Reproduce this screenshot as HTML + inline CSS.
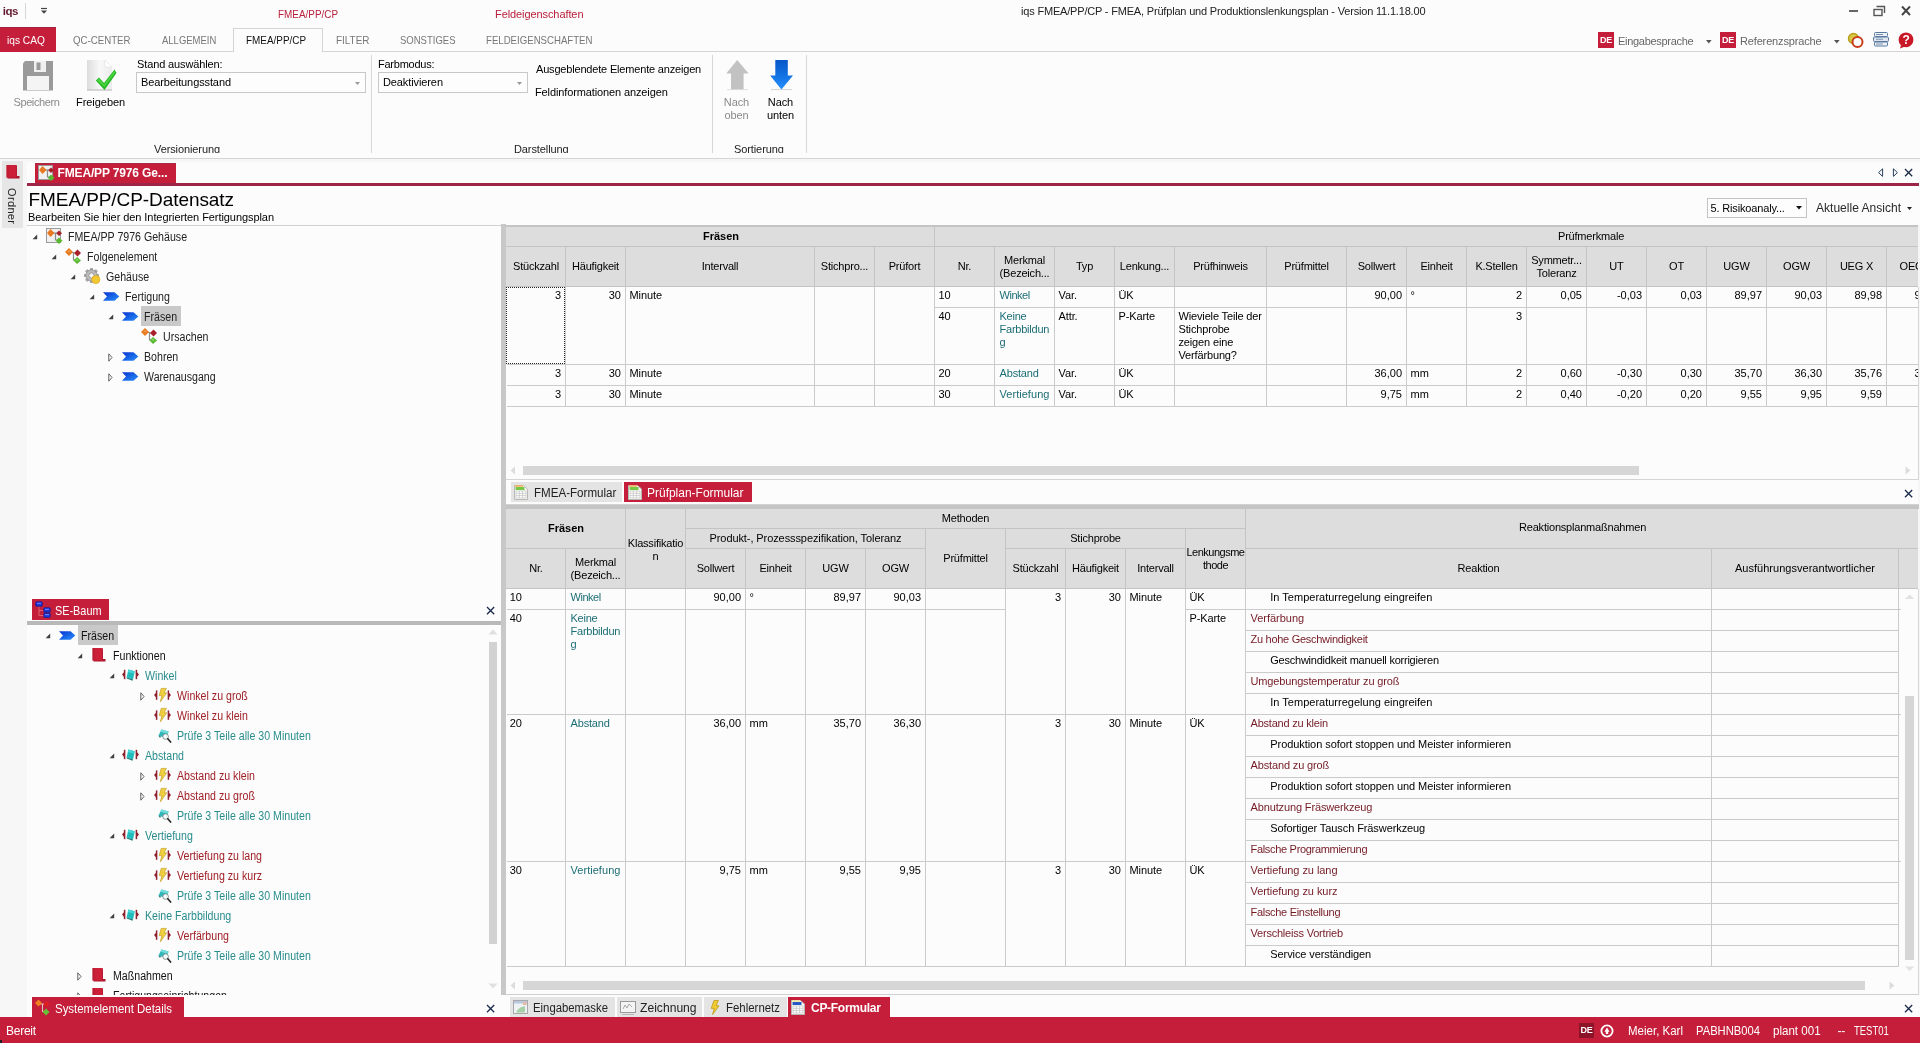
<!DOCTYPE html>
<html lang="de"><head><meta charset="utf-8"><title>iqs FMEA/PP/CP</title>
<style>
html,body{margin:0;padding:0;}
body{width:1920px;height:1043px;overflow:hidden;background:#fcfcfc;position:relative;font-family:"Liberation Sans",sans-serif;font-size:11px;color:#000;letter-spacing:-0.1px;}
body div{position:absolute;box-sizing:border-box;}
.t{position:absolute;white-space:nowrap;}
svg{position:absolute;overflow:visible;}
.hd{background:#dddddd;border-right:1px solid #c4c4c4;border-bottom:1px solid #c4c4c4;}
.c{border-right:1px solid #cbcbcb;border-bottom:1px solid #cbcbcb;background:#fcfcfc;}
</style></head><body><div id="app" style="left:0;top:0;width:1920px;height:1043px;will-change:transform;">
<span class="t" style="left:2.8px;top:3.8000000000000007px;line-height:14px;font-weight:bold;font-size:11.5px;color:#641a30;letter-spacing:-0.507px;">iqs</span>
<div style="left:25px;top:3px;width:1px;height:16px;background:#d8d8d8;"></div>
<svg style="left:40px;top:6.5px" width="8" height="8" viewBox="0 0 8 8"><path d="M1 1.5 H7" stroke="#444" stroke-width="1.2"/><path d="M1 3.5 H7 L4 6.8 Z" fill="#444"/></svg>
<span class="t" style="left:278px;top:6.5px;line-height:14px;color:#b8203c;letter-spacing:0;transform-origin:0 50%;transform:scaleX(0.9006);">FMEA/PP/CP</span>
<span class="t" style="left:495px;top:6.5px;line-height:14px;color:#b8203c;letter-spacing:-0.087px;">Feldeigenschaften</span>
<span class="t" style="left:1021px;top:3.8000000000000007px;line-height:14px;color:#222;letter-spacing:-0.184px;">iqs FMEA/PP/CP - FMEA, Prüfplan und Produktionslenkungsplan - Version 11.1.18.00</span>
<svg style="left:1848px;top:5px" width="64" height="12" viewBox="0 0 64 12"><path d="M1 6 H10" stroke="#555" stroke-width="1.8"/><path d="M28.5 1.5 H36.5 V8" fill="none" stroke="#555" stroke-width="1.4"/><rect x="26" y="4.5" width="8" height="6" fill="none" stroke="#555" stroke-width="1.4"/><path d="M54 1.5 L62 10 M62 1.5 L54 10" stroke="#444" stroke-width="1.9"/></svg>
<div style="left:0px;top:51px;width:1920px;height:1px;background:#d4d4d4;"></div>
<div style="left:0px;top:27px;width:56px;height:25px;background:#c41e3a;border-top:1px solid #a0223e;"></div>
<span class="t" style="left:7.2px;top:33.0px;line-height:14px;color:#fff;font-size:11px;letter-spacing:0;transform-origin:0 50%;transform:scaleX(0.9230);">iqs CAQ</span>
<span class="t" style="left:73px;top:32.5px;line-height:14px;color:#777;letter-spacing:0;transform-origin:0 50%;transform:scaleX(0.8794);">QC-CENTER</span>
<span class="t" style="left:161.5px;top:32.5px;line-height:14px;color:#777;letter-spacing:0;transform-origin:0 50%;transform:scaleX(0.8624);">ALLGEMEIN</span>
<div style="left:233px;top:28px;width:90px;height:24px;background:#fcfcfc;border:1px solid #d4d4d4;border-bottom:none;"></div>
<span class="t" style="left:246px;top:32.5px;line-height:14px;color:#111;letter-spacing:0;transform-origin:0 50%;transform:scaleX(0.9006);">FMEA/PP/CP</span>
<span class="t" style="left:336px;top:32.5px;line-height:14px;color:#777;letter-spacing:0;transform-origin:0 50%;transform:scaleX(0.9036);">FILTER</span>
<span class="t" style="left:400px;top:32.5px;line-height:14px;color:#777;letter-spacing:0;transform-origin:0 50%;transform:scaleX(0.8648);">SONSTIGES</span>
<span class="t" style="left:486px;top:32.5px;line-height:14px;color:#777;letter-spacing:0;transform-origin:0 50%;transform:scaleX(0.8756);">FELDEIGENSCHAFTEN</span>
<div style="left:1598px;top:32px;width:16px;height:16px;background:#c41e3a;color:#fff;font-weight:bold;font-size:9px;line-height:16px;text-align:center;letter-spacing:-0.3px;">DE</div>
<span class="t" style="left:1618px;top:33.5px;line-height:14px;color:#666;letter-spacing:-0.300px;">Eingabesprache</span>
<svg style="left:1706px;top:39.5px" width="6" height="4" viewBox="0 0 6 4"><path d="M0 0 H5.6 L2.8 3.4 Z" fill="#555"/></svg>
<div style="left:1720px;top:32px;width:16px;height:16px;background:#c41e3a;color:#fff;font-weight:bold;font-size:9px;line-height:16px;text-align:center;letter-spacing:-0.3px;">DE</div>
<span class="t" style="left:1740px;top:33.5px;line-height:14px;color:#666;letter-spacing:-0.154px;">Referenzsprache</span>
<svg style="left:1833.5px;top:39.5px" width="6" height="4" viewBox="0 0 6 4"><path d="M0 0 H5.6 L2.8 3.4 Z" fill="#555"/></svg>
<svg style="left:1847px;top:32px" width="18" height="17" viewBox="0 0 18 17"><circle cx="6.5" cy="6.5" r="5" fill="#d8c848" stroke="#b8a020" stroke-width="1.5"/><circle cx="10.5" cy="10" r="5" fill="#fff" stroke="#c83c1c" stroke-width="2"/></svg>
<svg style="left:1873px;top:32px" width="16" height="15" viewBox="0 0 16 15"><rect x="1.5" y="0.5" width="13" height="4" rx="1" fill="#eef2f6" stroke="#5878a0"/><rect x="0.5" y="5" width="15" height="4.5" rx="1" fill="#dfe6ee" stroke="#5878a0"/><rect x="1.5" y="10" width="13" height="4" rx="1" fill="#eef2f6" stroke="#5878a0"/><path d="M3 2.5 H10 M3 7.2 H10 M3 12 H10" stroke="#7890b0" stroke-width="1"/></svg>
<svg style="left:1898px;top:32px" width="17" height="17" viewBox="0 0 17 17"><circle cx="8" cy="7.8" r="7.4" fill="#c81828"/><path d="M3 13 L2 16.5 L7 14.5 Z" fill="#c81828"/><text x="8" y="12" text-anchor="middle" font-family="Liberation Sans, sans-serif" font-weight="bold" font-size="12" fill="#fff">?</text></svg>
<div style="left:0px;top:158px;width:1920px;height:1px;background:#d4d4d4;"></div>
<div style="left:0px;top:159px;width:1920px;height:3px;background:#f6f6f6;"></div>
<div style="left:371px;top:55px;width:1px;height:99px;background:#d8d8d8;"></div>
<div style="left:712px;top:55px;width:1px;height:99px;background:#d8d8d8;"></div>
<div style="left:806px;top:55px;width:1px;height:99px;background:#d8d8d8;"></div>
<svg style="left:22px;top:60px" width="32" height="31" viewBox="0 0 32 31"><path d="M3 1 H31 V30.5 H1 V3.5 Z" fill="#9a9a9a"/><rect x="12" y="1" width="12" height="11" fill="#f0f0f0"/><rect x="14.5" y="2.5" width="4" height="7.5" fill="#9a9a9a"/><rect x="5" y="16" width="22" height="14" fill="#f4f4f4"/></svg>
<span class="t" style="left:13.5px;top:95.0px;line-height:14px;color:#8a8a8a;letter-spacing:-0.404px;">Speichern</span>
<svg style="left:86px;top:59px" width="32" height="33" viewBox="0 0 32 33"><defs><linearGradient id="g1" x1="0" y1="0" x2="1" y2="0"><stop offset="0" stop-color="#dcdcdc"/><stop offset="0.5" stop-color="#f8f8f8"/><stop offset="1" stop-color="#ececec"/></linearGradient></defs><path d="M1 1 H19 L26 8 V31 H1 Z" fill="url(#g1)"/><path d="M19 1 V8 H26 Z" fill="#fff" stroke="#e0e0e0" stroke-width="0.6"/><path d="M1 31 H26" stroke="#c8c8c8" stroke-width="1.4"/><path d="M9.8 21.5 L13 18.5 L18 24 L28.5 10.5 L30.5 14 L18.5 31 Z" fill="#28b828"/><path d="M11 21.3 L13 19.6 L18 25.4 L28.3 12 L29.2 13.6 L18.3 28 Z" fill="#58e048" opacity="0.7"/></svg>
<span class="t" style="left:76px;top:95.0px;line-height:14px;letter-spacing:-0.05px;">Freigeben</span>
<span class="t" style="left:137px;top:57.0px;line-height:14px;letter-spacing:-0.12px;">Stand auswählen:</span>
<div style="left:136px;top:72px;width:230px;height:21px;background:#fdfdfd;border:1px solid #c8c8c8;"></div>
<span class="t" style="left:141px;top:74.5px;line-height:14px;letter-spacing:-0.108px;">Bearbeitungsstand</span>
<svg style="left:355px;top:82px" width="5" height="3" viewBox="0 0 5 3"><path d="M0 0 H5 L2.5 3 Z" fill="#9a9a9a"/></svg>
<span class="t" style="left:154px;top:142.0px;line-height:14px;color:#222;letter-spacing:-0.1px;">Versionierung</span>
<span class="t" style="left:378px;top:57.0px;line-height:14px;letter-spacing:-0.243px;">Farbmodus:</span>
<div style="left:378px;top:72px;width:150px;height:21px;background:#fdfdfd;border:1px solid #c8c8c8;"></div>
<span class="t" style="left:383px;top:74.5px;line-height:14px;letter-spacing:-0.103px;">Deaktivieren</span>
<svg style="left:517px;top:82px" width="5" height="3" viewBox="0 0 5 3"><path d="M0 0 H5 L2.5 3 Z" fill="#9a9a9a"/></svg>
<span class="t" style="left:536px;top:61.5px;line-height:14px;letter-spacing:-0.18px;">Ausgeblendete Elemente anzeigen</span>
<span class="t" style="left:535px;top:84.5px;line-height:14px;letter-spacing:-0.12px;">Feldinformationen anzeigen</span>
<span class="t" style="left:514px;top:142.0px;line-height:14px;color:#222;">Darstellung</span>
<svg style="left:725px;top:59px" width="25" height="31" viewBox="0 0 25 31"><path d="M12.2 1 L23.6 14.5 H18.6 V30.4 H6 V14.5 H1.2 Z" fill="#c2c2c2"/><path d="M2 30.6 H23" stroke="#d8d8d8" stroke-width="0.8"/></svg>
<svg style="left:769px;top:59px" width="25" height="31" viewBox="0 0 25 31"><defs><linearGradient id="g2" x1="0" y1="0" x2="0" y2="1"><stop offset="0" stop-color="#0858c8"/><stop offset="0.5" stop-color="#1070e0"/><stop offset="1" stop-color="#2890ff"/></linearGradient></defs><path d="M6.3 1 H18.8 V16.4 H24 L12.4 30.4 L1.2 16.4 H6.3 Z" fill="url(#g2)"/><path d="M2 30.6 H23" stroke="#c8c8c8" stroke-width="0.8"/></svg>
<span class="t" style="left:712px;width:49px;text-align:center;top:95.0px;line-height:14px;color:#8a8a8a;">Nach</span>
<span class="t" style="left:712px;width:49px;text-align:center;top:108.0px;line-height:14px;color:#8a8a8a;">oben</span>
<span class="t" style="left:756px;width:49px;text-align:center;top:95.0px;line-height:14px;">Nach</span>
<span class="t" style="left:756px;width:49px;text-align:center;top:108.0px;line-height:14px;">unten</span>
<span class="t" style="left:734px;top:142.0px;line-height:14px;color:#222;">Sortierung</span>
<div style="left:0px;top:153px;width:1920px;height:5px;background:#fcfcfc;"></div>
<div style="left:0px;top:159px;width:27px;height:858px;background:#f7f7f7;"></div>
<div style="left:2px;top:161px;width:21px;height:67px;background:#e6e6e6;"></div>
<svg style="left:6px;top:165px" width="14.0" height="14.0" viewBox="0 0 14 14"><path d="M1.5 0.5 H11 V11 H13.5 V13.5 H1.5 Z" fill="#a8162c"/><path d="M0.5 0 H10.5 V12.5 H0.5 Z" fill="#cc2038"/><path d="M0.5 0 H3 V12.5 H0.5 Z" fill="#b81a30" opacity="0.6"/></svg>
<span class="t" style="left:5px;top:187.5px;width:14px;height:40px;writing-mode:vertical-rl;font-size:11px;line-height:14px;color:#222;letter-spacing:0.354px;">Ordner</span>
<div style="left:35px;top:163px;width:141px;height:20px;background:#c41e3a;border-top:1px solid #a62a44;"></div>
<svg style="left:38px;top:165px" width="17" height="16" viewBox="0 0 17 16"><rect x="0.5" y="0.5" width="14" height="14" fill="#f0f0f0" stroke="#9a9a9a"/><path d="M5 5 H11 M9.5 5 V12 H11" fill="none" stroke="#8a8a8a" stroke-width="1.2"/><path d="M4.5 1 L8.5 5 L4.5 9 L1 5 Z" fill="#e87a22"/><path d="M13 2.5 L16 5.2 L13 8 L10.2 5.2 Z" fill="#a82028"/><path d="M13 9.5 L16.5 12.8 L13 16 L9.8 12.8 Z" fill="#58b830"/></svg>
<span class="t" style="left:57.5px;top:166.0px;line-height:14px;color:#fff;font-weight:bold;font-size:12px;letter-spacing:-0.146px;">FMEA/PP 7976 Ge...</span>
<div style="left:27px;top:183px;width:1892px;height:3px;background:#9e2448;"></div>
<svg style="left:1877px;top:168px" width="24" height="10" viewBox="0 0 24 10"><path d="M5.6 0.8 L1.6 4.6 L5.6 8.4 Z" fill="none" stroke="#2a3f5f" stroke-width="1"/><path d="M16.4 0.8 L20.4 4.6 L16.4 8.4 Z" fill="none" stroke="#2a3f5f" stroke-width="1"/></svg>
<svg style="left:1904.4px;top:167.70000000000002px" width="9.2" height="9.2" viewBox="0 0 9.2 9.2"><path d="M1 1 L8.2 8.2 M8.2 1 L1 8.2" stroke="#1a2a4a" stroke-width="1.3" fill="none"/></svg>
<span class="t" style="left:28.5px;top:187.5px;line-height:24px;font-size:19px;color:#000;letter-spacing:-0.076px;">FMEA/PP/CP-Datensatz</span>
<span class="t" style="left:28px;top:210.0px;line-height:14px;letter-spacing:-0.07px;">Bearbeiten Sie hier den Integrierten Fertigungsplan</span>
<div style="left:27px;top:225px;width:1891px;height:1px;background:#d0d0d0;"></div>
<div style="left:1707px;top:198px;width:100px;height:20px;background:#fdfdfd;border:1px solid #c4c4c4;"></div>
<span class="t" style="left:1710.5px;top:201.0px;line-height:14px;letter-spacing:-0.152px;">5. Risikoanaly...</span>
<svg style="left:1795.5px;top:206.2px" width="6" height="4" viewBox="0 0 6 4"><path d="M0 0 H6 L3 3.6 Z" fill="#111"/></svg>
<span class="t" style="left:1815.5px;top:201.0px;line-height:14px;font-size:12px;color:#2a2a2a;letter-spacing:0;transform-origin:0 50%;transform:scaleX(1.0034);">Aktuelle Ansicht</span>
<svg style="left:1907px;top:207.2px" width="5" height="3" viewBox="0 0 5 3"><path d="M0 0 H5 L2.5 3 Z" fill="#222"/></svg>
<svg style="left:31.5px;top:234px" width="6" height="6" viewBox="0 0 6 6"><path d="M5.2 0.6 L5.2 5.2 L0.6 5.2 Z" fill="#404040"/></svg>
<svg style="left:46px;top:228px" width="17" height="16" viewBox="0 0 17 16"><rect x="0.5" y="0.5" width="14" height="14" fill="#f0f0f0" stroke="#9a9a9a"/><path d="M5 5 H11 M9.5 5 V12 H11" fill="none" stroke="#8a8a8a" stroke-width="1.2"/><path d="M4.5 1 L8.5 5 L4.5 9 L1 5 Z" fill="#e87a22"/><path d="M13 2.5 L16 5.2 L13 8 L10.2 5.2 Z" fill="#a82028"/><path d="M13 9.5 L16.5 12.8 L13 16 L9.8 12.8 Z" fill="#58b830"/></svg>
<span class="t" style="left:68px;top:229.5px;line-height:14px;color:#222;font-size:12px;letter-spacing:0;transform-origin:0 50%;transform:scaleX(0.885);">FMEA/PP 7976 Gehäuse</span>
<svg style="left:50.5px;top:254px" width="6" height="6" viewBox="0 0 6 6"><path d="M5.2 0.6 L5.2 5.2 L0.6 5.2 Z" fill="#404040"/></svg>
<svg style="left:65px;top:248px" width="16" height="16" viewBox="0 0 16 16"><path d="M4 4.5 H9.5 M8.5 4.5 V12 H10" fill="none" stroke="#8a8a8a" stroke-width="1.2"/><path d="M4 0 L8 4 L4 8 L0 4 Z" fill="#e87a22"/><path d="M2.2 4 L4 2.2 L5.8 4 Z" fill="#f4a35c"/><path d="M12.5 1.5 L16 5 L12.5 8.5 L9 5 Z" fill="#a82028"/><path d="M12 9 L16 12.5 L12 16 L8.6 12.5 Z" fill="#58b830"/><path d="M10 12.5 L12 10.6 L14 12.5 Z" fill="#8cd868"/></svg>
<span class="t" style="left:87px;top:249.5px;line-height:14px;color:#222;font-size:12px;letter-spacing:0;transform-origin:0 50%;transform:scaleX(0.885);">Folgenelement</span>
<svg style="left:69.5px;top:274px" width="6" height="6" viewBox="0 0 6 6"><path d="M5.2 0.6 L5.2 5.2 L0.6 5.2 Z" fill="#404040"/></svg>
<svg style="left:84px;top:268px" width="17" height="17" viewBox="0 0 17 17"><rect x="6" y="0" width="3" height="15" rx="0.8" fill="#a8a8a8" transform="rotate(0 7.5 7.5)"/><rect x="6" y="0" width="3" height="15" rx="0.8" fill="#a8a8a8" transform="rotate(45 7.5 7.5)"/><rect x="6" y="0" width="3" height="15" rx="0.8" fill="#a8a8a8" transform="rotate(90 7.5 7.5)"/><rect x="6" y="0" width="3" height="15" rx="0.8" fill="#a8a8a8" transform="rotate(135 7.5 7.5)"/><rect x="6" y="0" width="3" height="15" rx="0.8" fill="#a8a8a8" transform="rotate(180 7.5 7.5)"/><rect x="6" y="0" width="3" height="15" rx="0.8" fill="#a8a8a8" transform="rotate(225 7.5 7.5)"/><rect x="6" y="0" width="3" height="15" rx="0.8" fill="#a8a8a8" transform="rotate(270 7.5 7.5)"/><rect x="6" y="0" width="3" height="15" rx="0.8" fill="#a8a8a8" transform="rotate(315 7.5 7.5)"/><circle cx="7.5" cy="7.5" r="5.6" fill="#bcbcbc" stroke="#8c8c8c" stroke-width="0.8"/><circle cx="7.5" cy="7.5" r="2.6" fill="#f4f4f4" stroke="#8c8c8c" stroke-width="0.8"/><circle cx="11.8" cy="11.6" r="4" fill="#f2c832" stroke="#d8a818" stroke-width="0.8"/></svg>
<span class="t" style="left:106px;top:269.5px;line-height:14px;color:#222;font-size:12px;letter-spacing:0;transform-origin:0 50%;transform:scaleX(0.885);">Gehäuse</span>
<svg style="left:88.5px;top:294px" width="6" height="6" viewBox="0 0 6 6"><path d="M5.2 0.6 L5.2 5.2 L0.6 5.2 Z" fill="#404040"/></svg>
<svg style="left:103px;top:291.8px" width="17" height="9" viewBox="0 0 17 9"><defs><linearGradient id="g4" x1="0" y1="0" x2="1" y2="1"><stop offset="0" stop-color="#0a2fd0"/><stop offset="0.55" stop-color="#1868e8"/><stop offset="1" stop-color="#2c8cf8"/></linearGradient></defs><path d="M0 0.3 H11.5 L16.3 4.5 L11.5 8.7 H0 L4 4.5 Z" fill="url(#g4)"/></svg>
<span class="t" style="left:125px;top:289.5px;line-height:14px;color:#222;font-size:12px;letter-spacing:0;transform-origin:0 50%;transform:scaleX(0.885);">Fertigung</span>
<div style="left:141px;top:306px;width:40px;height:20px;background:#c9c9c9;"></div>
<svg style="left:107.5px;top:314px" width="6" height="6" viewBox="0 0 6 6"><path d="M5.2 0.6 L5.2 5.2 L0.6 5.2 Z" fill="#404040"/></svg>
<svg style="left:122px;top:311.8px" width="17" height="9" viewBox="0 0 17 9"><defs><linearGradient id="g5" x1="0" y1="0" x2="1" y2="1"><stop offset="0" stop-color="#0a2fd0"/><stop offset="0.55" stop-color="#1868e8"/><stop offset="1" stop-color="#2c8cf8"/></linearGradient></defs><path d="M0 0.3 H11.5 L16.3 4.5 L11.5 8.7 H0 L4 4.5 Z" fill="url(#g5)"/></svg>
<span class="t" style="left:144px;top:309.5px;line-height:14px;color:#222;font-size:12px;letter-spacing:0;transform-origin:0 50%;transform:scaleX(0.885);">Fräsen</span>
<svg style="left:141px;top:328px" width="16" height="16" viewBox="0 0 16 16"><path d="M4 4.5 H9.5 M8.5 4.5 V12 H10" fill="none" stroke="#8a8a8a" stroke-width="1.2"/><path d="M4 0 L8 4 L4 8 L0 4 Z" fill="#e87a22"/><path d="M2.2 4 L4 2.2 L5.8 4 Z" fill="#f4a35c"/><path d="M12.5 1.5 L16 5 L12.5 8.5 L9 5 Z" fill="#a82028"/><path d="M12 9 L16 12.5 L12 16 L8.6 12.5 Z" fill="#58b830"/><path d="M10 12.5 L12 10.6 L14 12.5 Z" fill="#8cd868"/></svg>
<span class="t" style="left:163px;top:329.5px;line-height:14px;color:#222;font-size:12px;letter-spacing:0;transform-origin:0 50%;transform:scaleX(0.885);">Ursachen</span>
<svg style="left:108.3px;top:352.5px" width="6" height="9" viewBox="0 0 6 9"><path d="M0.8 0.8 L4 4.5 L0.8 8.2 Z" fill="#fcfcfc" stroke="#606060" stroke-width="1"/></svg>
<svg style="left:122px;top:351.8px" width="17" height="9" viewBox="0 0 17 9"><defs><linearGradient id="g6" x1="0" y1="0" x2="1" y2="1"><stop offset="0" stop-color="#0a2fd0"/><stop offset="0.55" stop-color="#1868e8"/><stop offset="1" stop-color="#2c8cf8"/></linearGradient></defs><path d="M0 0.3 H11.5 L16.3 4.5 L11.5 8.7 H0 L4 4.5 Z" fill="url(#g6)"/></svg>
<span class="t" style="left:144px;top:349.5px;line-height:14px;color:#222;font-size:12px;letter-spacing:0;transform-origin:0 50%;transform:scaleX(0.885);">Bohren</span>
<svg style="left:108.3px;top:372.5px" width="6" height="9" viewBox="0 0 6 9"><path d="M0.8 0.8 L4 4.5 L0.8 8.2 Z" fill="#fcfcfc" stroke="#606060" stroke-width="1"/></svg>
<svg style="left:122px;top:371.8px" width="17" height="9" viewBox="0 0 17 9"><defs><linearGradient id="g7" x1="0" y1="0" x2="1" y2="1"><stop offset="0" stop-color="#0a2fd0"/><stop offset="0.55" stop-color="#1868e8"/><stop offset="1" stop-color="#2c8cf8"/></linearGradient></defs><path d="M0 0.3 H11.5 L16.3 4.5 L11.5 8.7 H0 L4 4.5 Z" fill="url(#g7)"/></svg>
<span class="t" style="left:144px;top:369.5px;line-height:14px;color:#222;font-size:12px;letter-spacing:0;transform-origin:0 50%;transform:scaleX(0.885);">Warenausgang</span>
<div style="left:501px;top:224px;width:5px;height:771px;background:#c8c8c8;"></div>
<div style="left:32px;top:599px;width:77px;height:21px;background:#c41e3a;"></div>
<svg style="left:35px;top:601px" width="16" height="17" viewBox="0 0 16 17"><path d="M4 5 V14.5 H9 M4 9.5 H9" fill="none" stroke="#e06070" stroke-width="1"/><rect x="0.8" y="0.8" width="6.4" height="4.4" rx="0.8" fill="#2038d8" stroke="#101890" stroke-width="0.8"/><rect x="8.8" y="6.8" width="6.4" height="4.4" rx="0.8" fill="#2038d8" stroke="#101890" stroke-width="0.8"/><rect x="8.8" y="12.2" width="6.4" height="4.2" rx="0.8" fill="#2038d8" stroke="#101890" stroke-width="0.8"/><path d="M2 2.3 H6 M10 8.3 H14 M10 13.6 H14" stroke="#7088ff" stroke-width="1"/></svg>
<span class="t" style="left:55px;top:604.0px;line-height:14px;color:#fff;font-size:12px;letter-spacing:0;transform-origin:0 50%;transform:scaleX(0.9055);">SE-Baum</span>
<svg style="left:486.4px;top:605.9px" width="9.2" height="9.2" viewBox="0 0 9.2 9.2"><path d="M1 1 L8.2 8.2 M8.2 1 L1 8.2" stroke="#1a2a4a" stroke-width="1.3" fill="none"/></svg>
<div style="left:27px;top:621px;width:474px;height:4px;background:#b9b9b9;"></div>
<div style="left:78px;top:625px;width:40px;height:20px;background:#c9c9c9;"></div>
<svg style="left:44.5px;top:633px" width="6" height="6" viewBox="0 0 6 6"><path d="M5.2 0.6 L5.2 5.2 L0.6 5.2 Z" fill="#404040"/></svg>
<svg style="left:59px;top:630.8px" width="17" height="9" viewBox="0 0 17 9"><defs><linearGradient id="g8" x1="0" y1="0" x2="1" y2="1"><stop offset="0" stop-color="#0a2fd0"/><stop offset="0.55" stop-color="#1868e8"/><stop offset="1" stop-color="#2c8cf8"/></linearGradient></defs><path d="M0 0.3 H11.5 L16.3 4.5 L11.5 8.7 H0 L4 4.5 Z" fill="url(#g8)"/></svg>
<span class="t" style="left:81px;top:628.5px;line-height:14px;color:#111;font-size:12px;letter-spacing:0;transform-origin:0 50%;transform:scaleX(0.885);">Fräsen</span>
<svg style="left:76.5px;top:653px" width="6" height="6" viewBox="0 0 6 6"><path d="M5.2 0.6 L5.2 5.2 L0.6 5.2 Z" fill="#404040"/></svg>
<svg style="left:92px;top:648px" width="14.0" height="14.0" viewBox="0 0 14 14"><path d="M1.5 0.5 H11 V11 H13.5 V13.5 H1.5 Z" fill="#a8162c"/><path d="M0.5 0 H10.5 V12.5 H0.5 Z" fill="#cc2038"/><path d="M0.5 0 H3 V12.5 H0.5 Z" fill="#b81a30" opacity="0.6"/></svg>
<span class="t" style="left:113px;top:648.5px;line-height:14px;color:#111;font-size:12px;letter-spacing:0;transform-origin:0 50%;transform:scaleX(0.885);">Funktionen</span>
<svg style="left:108.5px;top:673px" width="6" height="6" viewBox="0 0 6 6"><path d="M5.2 0.6 L5.2 5.2 L0.6 5.2 Z" fill="#404040"/></svg>
<svg style="left:122px;top:669px" width="17" height="12" viewBox="0 0 17 12"><path d="M2.6 0.8 V10.2" stroke="#8e2030" stroke-width="1.5"/><path d="M14.4 0.8 V10.2" stroke="#8e2030" stroke-width="1.5"/><path d="M0 5.5 L2.6 2.6 V8.4 Z M17 5.5 L14.4 2.6 V8.4 Z" fill="#8e2030"/><path d="M6.4 0.6 L12.8 2.2 L11 10.6 L4.6 8.4 Z" fill="#22bcbc"/><path d="M6.4 0.6 L12.8 2.2 L12.2 4.6 L5.9 3 Z" fill="#48d4d4"/><path d="M4.6 8.4 L11 10.6 L10.6 11.8 L4.8 9.6 Z" fill="#1a7474"/></svg>
<span class="t" style="left:145px;top:668.5px;line-height:14px;color:#2a8c8c;font-size:12px;letter-spacing:0;transform-origin:0 50%;transform:scaleX(0.885);">Winkel</span>
<svg style="left:140.3px;top:691.5px" width="6" height="9" viewBox="0 0 6 9"><path d="M0.8 0.8 L4 4.5 L0.8 8.2 Z" fill="#fcfcfc" stroke="#606060" stroke-width="1"/></svg>
<svg style="left:154px;top:688px" width="17" height="14" viewBox="0 0 17 14"><g transform="translate(0,1.6)"><path d="M2.6 0.8 V10.2" stroke="#8e2030" stroke-width="1.5"/><path d="M14.4 0.8 V10.2" stroke="#8e2030" stroke-width="1.5"/><path d="M0 5.5 L2.6 2.6 V8.4 Z M17 5.5 L14.4 2.6 V8.4 Z" fill="#8e2030"/></g><path d="M7.2 0.4 H12.4 L10 4.8 H12.8 L6.4 13.8 L7.8 7.6 H5.2 Z" fill="#f0d040" stroke="#c4a028" stroke-width="0.7"/></svg>
<span class="t" style="left:177px;top:688.5px;line-height:14px;color:#a02028;font-size:12px;letter-spacing:0;transform-origin:0 50%;transform:scaleX(0.885);">Winkel zu groß</span>
<svg style="left:154px;top:708px" width="17" height="14" viewBox="0 0 17 14"><g transform="translate(0,1.6)"><path d="M2.6 0.8 V10.2" stroke="#8e2030" stroke-width="1.5"/><path d="M14.4 0.8 V10.2" stroke="#8e2030" stroke-width="1.5"/><path d="M0 5.5 L2.6 2.6 V8.4 Z M17 5.5 L14.4 2.6 V8.4 Z" fill="#8e2030"/></g><path d="M7.2 0.4 H12.4 L10 4.8 H12.8 L6.4 13.8 L7.8 7.6 H5.2 Z" fill="#f0d040" stroke="#c4a028" stroke-width="0.7"/></svg>
<span class="t" style="left:177px;top:708.5px;line-height:14px;color:#a02028;font-size:12px;letter-spacing:0;transform-origin:0 50%;transform:scaleX(0.885);">Winkel zu klein</span>
<svg style="left:157px;top:729px" width="15" height="14" viewBox="0 0 15 14"><path d="M4.4 0.6 L11.6 2.6 L9.4 9 L1.4 6.8 Z" fill="#30b8b8"/><path d="M4.4 0.6 L11.6 2.6 L10.8 4.8 L3.6 2.8 Z" fill="#70dcdc"/><path d="M1.4 6.8 L4 7.6 L3 9 Z" fill="#207070"/><circle cx="8.6" cy="7.6" r="2.8" fill="#f4fcfc" stroke="#788888" stroke-width="0.9"/><path d="M10.8 9.8 L13.6 13" stroke="#282828" stroke-width="1.7" stroke-linecap="round"/></svg>
<span class="t" style="left:177px;top:728.5px;line-height:14px;color:#2a8c8c;font-size:12px;letter-spacing:0;transform-origin:0 50%;transform:scaleX(0.885);">Prüfe 3 Teile alle 30 Minuten</span>
<svg style="left:108.5px;top:753px" width="6" height="6" viewBox="0 0 6 6"><path d="M5.2 0.6 L5.2 5.2 L0.6 5.2 Z" fill="#404040"/></svg>
<svg style="left:122px;top:749px" width="17" height="12" viewBox="0 0 17 12"><path d="M2.6 0.8 V10.2" stroke="#8e2030" stroke-width="1.5"/><path d="M14.4 0.8 V10.2" stroke="#8e2030" stroke-width="1.5"/><path d="M0 5.5 L2.6 2.6 V8.4 Z M17 5.5 L14.4 2.6 V8.4 Z" fill="#8e2030"/><path d="M6.4 0.6 L12.8 2.2 L11 10.6 L4.6 8.4 Z" fill="#22bcbc"/><path d="M6.4 0.6 L12.8 2.2 L12.2 4.6 L5.9 3 Z" fill="#48d4d4"/><path d="M4.6 8.4 L11 10.6 L10.6 11.8 L4.8 9.6 Z" fill="#1a7474"/></svg>
<span class="t" style="left:145px;top:748.5px;line-height:14px;color:#2a8c8c;font-size:12px;letter-spacing:0;transform-origin:0 50%;transform:scaleX(0.885);">Abstand</span>
<svg style="left:140.3px;top:771.5px" width="6" height="9" viewBox="0 0 6 9"><path d="M0.8 0.8 L4 4.5 L0.8 8.2 Z" fill="#fcfcfc" stroke="#606060" stroke-width="1"/></svg>
<svg style="left:154px;top:768px" width="17" height="14" viewBox="0 0 17 14"><g transform="translate(0,1.6)"><path d="M2.6 0.8 V10.2" stroke="#8e2030" stroke-width="1.5"/><path d="M14.4 0.8 V10.2" stroke="#8e2030" stroke-width="1.5"/><path d="M0 5.5 L2.6 2.6 V8.4 Z M17 5.5 L14.4 2.6 V8.4 Z" fill="#8e2030"/></g><path d="M7.2 0.4 H12.4 L10 4.8 H12.8 L6.4 13.8 L7.8 7.6 H5.2 Z" fill="#f0d040" stroke="#c4a028" stroke-width="0.7"/></svg>
<span class="t" style="left:177px;top:768.5px;line-height:14px;color:#a02028;font-size:12px;letter-spacing:0;transform-origin:0 50%;transform:scaleX(0.885);">Abstand zu klein</span>
<svg style="left:140.3px;top:791.5px" width="6" height="9" viewBox="0 0 6 9"><path d="M0.8 0.8 L4 4.5 L0.8 8.2 Z" fill="#fcfcfc" stroke="#606060" stroke-width="1"/></svg>
<svg style="left:154px;top:788px" width="17" height="14" viewBox="0 0 17 14"><g transform="translate(0,1.6)"><path d="M2.6 0.8 V10.2" stroke="#8e2030" stroke-width="1.5"/><path d="M14.4 0.8 V10.2" stroke="#8e2030" stroke-width="1.5"/><path d="M0 5.5 L2.6 2.6 V8.4 Z M17 5.5 L14.4 2.6 V8.4 Z" fill="#8e2030"/></g><path d="M7.2 0.4 H12.4 L10 4.8 H12.8 L6.4 13.8 L7.8 7.6 H5.2 Z" fill="#f0d040" stroke="#c4a028" stroke-width="0.7"/></svg>
<span class="t" style="left:177px;top:788.5px;line-height:14px;color:#a02028;font-size:12px;letter-spacing:0;transform-origin:0 50%;transform:scaleX(0.885);">Abstand zu groß</span>
<svg style="left:157px;top:809px" width="15" height="14" viewBox="0 0 15 14"><path d="M4.4 0.6 L11.6 2.6 L9.4 9 L1.4 6.8 Z" fill="#30b8b8"/><path d="M4.4 0.6 L11.6 2.6 L10.8 4.8 L3.6 2.8 Z" fill="#70dcdc"/><path d="M1.4 6.8 L4 7.6 L3 9 Z" fill="#207070"/><circle cx="8.6" cy="7.6" r="2.8" fill="#f4fcfc" stroke="#788888" stroke-width="0.9"/><path d="M10.8 9.8 L13.6 13" stroke="#282828" stroke-width="1.7" stroke-linecap="round"/></svg>
<span class="t" style="left:177px;top:808.5px;line-height:14px;color:#2a8c8c;font-size:12px;letter-spacing:0;transform-origin:0 50%;transform:scaleX(0.885);">Prüfe 3 Teile alle 30 Minuten</span>
<svg style="left:108.5px;top:833px" width="6" height="6" viewBox="0 0 6 6"><path d="M5.2 0.6 L5.2 5.2 L0.6 5.2 Z" fill="#404040"/></svg>
<svg style="left:122px;top:829px" width="17" height="12" viewBox="0 0 17 12"><path d="M2.6 0.8 V10.2" stroke="#8e2030" stroke-width="1.5"/><path d="M14.4 0.8 V10.2" stroke="#8e2030" stroke-width="1.5"/><path d="M0 5.5 L2.6 2.6 V8.4 Z M17 5.5 L14.4 2.6 V8.4 Z" fill="#8e2030"/><path d="M6.4 0.6 L12.8 2.2 L11 10.6 L4.6 8.4 Z" fill="#22bcbc"/><path d="M6.4 0.6 L12.8 2.2 L12.2 4.6 L5.9 3 Z" fill="#48d4d4"/><path d="M4.6 8.4 L11 10.6 L10.6 11.8 L4.8 9.6 Z" fill="#1a7474"/></svg>
<span class="t" style="left:145px;top:828.5px;line-height:14px;color:#2a8c8c;font-size:12px;letter-spacing:0;transform-origin:0 50%;transform:scaleX(0.885);">Vertiefung</span>
<svg style="left:154px;top:848px" width="17" height="14" viewBox="0 0 17 14"><g transform="translate(0,1.6)"><path d="M2.6 0.8 V10.2" stroke="#8e2030" stroke-width="1.5"/><path d="M14.4 0.8 V10.2" stroke="#8e2030" stroke-width="1.5"/><path d="M0 5.5 L2.6 2.6 V8.4 Z M17 5.5 L14.4 2.6 V8.4 Z" fill="#8e2030"/></g><path d="M7.2 0.4 H12.4 L10 4.8 H12.8 L6.4 13.8 L7.8 7.6 H5.2 Z" fill="#f0d040" stroke="#c4a028" stroke-width="0.7"/></svg>
<span class="t" style="left:177px;top:848.5px;line-height:14px;color:#a02028;font-size:12px;letter-spacing:0;transform-origin:0 50%;transform:scaleX(0.885);">Vertiefung zu lang</span>
<svg style="left:154px;top:868px" width="17" height="14" viewBox="0 0 17 14"><g transform="translate(0,1.6)"><path d="M2.6 0.8 V10.2" stroke="#8e2030" stroke-width="1.5"/><path d="M14.4 0.8 V10.2" stroke="#8e2030" stroke-width="1.5"/><path d="M0 5.5 L2.6 2.6 V8.4 Z M17 5.5 L14.4 2.6 V8.4 Z" fill="#8e2030"/></g><path d="M7.2 0.4 H12.4 L10 4.8 H12.8 L6.4 13.8 L7.8 7.6 H5.2 Z" fill="#f0d040" stroke="#c4a028" stroke-width="0.7"/></svg>
<span class="t" style="left:177px;top:868.5px;line-height:14px;color:#a02028;font-size:12px;letter-spacing:0;transform-origin:0 50%;transform:scaleX(0.885);">Vertiefung zu kurz</span>
<svg style="left:157px;top:889px" width="15" height="14" viewBox="0 0 15 14"><path d="M4.4 0.6 L11.6 2.6 L9.4 9 L1.4 6.8 Z" fill="#30b8b8"/><path d="M4.4 0.6 L11.6 2.6 L10.8 4.8 L3.6 2.8 Z" fill="#70dcdc"/><path d="M1.4 6.8 L4 7.6 L3 9 Z" fill="#207070"/><circle cx="8.6" cy="7.6" r="2.8" fill="#f4fcfc" stroke="#788888" stroke-width="0.9"/><path d="M10.8 9.8 L13.6 13" stroke="#282828" stroke-width="1.7" stroke-linecap="round"/></svg>
<span class="t" style="left:177px;top:888.5px;line-height:14px;color:#2a8c8c;font-size:12px;letter-spacing:0;transform-origin:0 50%;transform:scaleX(0.885);">Prüfe 3 Teile alle 30 Minuten</span>
<svg style="left:108.5px;top:913px" width="6" height="6" viewBox="0 0 6 6"><path d="M5.2 0.6 L5.2 5.2 L0.6 5.2 Z" fill="#404040"/></svg>
<svg style="left:122px;top:909px" width="17" height="12" viewBox="0 0 17 12"><path d="M2.6 0.8 V10.2" stroke="#8e2030" stroke-width="1.5"/><path d="M14.4 0.8 V10.2" stroke="#8e2030" stroke-width="1.5"/><path d="M0 5.5 L2.6 2.6 V8.4 Z M17 5.5 L14.4 2.6 V8.4 Z" fill="#8e2030"/><path d="M6.4 0.6 L12.8 2.2 L11 10.6 L4.6 8.4 Z" fill="#22bcbc"/><path d="M6.4 0.6 L12.8 2.2 L12.2 4.6 L5.9 3 Z" fill="#48d4d4"/><path d="M4.6 8.4 L11 10.6 L10.6 11.8 L4.8 9.6 Z" fill="#1a7474"/></svg>
<span class="t" style="left:145px;top:908.5px;line-height:14px;color:#2a8c8c;font-size:12px;letter-spacing:0;transform-origin:0 50%;transform:scaleX(0.885);">Keine Farbbildung</span>
<svg style="left:154px;top:928px" width="17" height="14" viewBox="0 0 17 14"><g transform="translate(0,1.6)"><path d="M2.6 0.8 V10.2" stroke="#8e2030" stroke-width="1.5"/><path d="M14.4 0.8 V10.2" stroke="#8e2030" stroke-width="1.5"/><path d="M0 5.5 L2.6 2.6 V8.4 Z M17 5.5 L14.4 2.6 V8.4 Z" fill="#8e2030"/></g><path d="M7.2 0.4 H12.4 L10 4.8 H12.8 L6.4 13.8 L7.8 7.6 H5.2 Z" fill="#f0d040" stroke="#c4a028" stroke-width="0.7"/></svg>
<span class="t" style="left:177px;top:928.5px;line-height:14px;color:#a02028;font-size:12px;letter-spacing:0;transform-origin:0 50%;transform:scaleX(0.885);">Verfärbung</span>
<svg style="left:157px;top:949px" width="15" height="14" viewBox="0 0 15 14"><path d="M4.4 0.6 L11.6 2.6 L9.4 9 L1.4 6.8 Z" fill="#30b8b8"/><path d="M4.4 0.6 L11.6 2.6 L10.8 4.8 L3.6 2.8 Z" fill="#70dcdc"/><path d="M1.4 6.8 L4 7.6 L3 9 Z" fill="#207070"/><circle cx="8.6" cy="7.6" r="2.8" fill="#f4fcfc" stroke="#788888" stroke-width="0.9"/><path d="M10.8 9.8 L13.6 13" stroke="#282828" stroke-width="1.7" stroke-linecap="round"/></svg>
<span class="t" style="left:177px;top:948.5px;line-height:14px;color:#2a8c8c;font-size:12px;letter-spacing:0;transform-origin:0 50%;transform:scaleX(0.885);">Prüfe 3 Teile alle 30 Minuten</span>
<svg style="left:77.3px;top:971.5px" width="6" height="9" viewBox="0 0 6 9"><path d="M0.8 0.8 L4 4.5 L0.8 8.2 Z" fill="#fcfcfc" stroke="#606060" stroke-width="1"/></svg>
<svg style="left:92px;top:968px" width="14.0" height="14.0" viewBox="0 0 14 14"><path d="M1.5 0.5 H11 V11 H13.5 V13.5 H1.5 Z" fill="#a8162c"/><path d="M0.5 0 H10.5 V12.5 H0.5 Z" fill="#cc2038"/><path d="M0.5 0 H3 V12.5 H0.5 Z" fill="#b81a30" opacity="0.6"/></svg>
<span class="t" style="left:113px;top:968.5px;line-height:14px;color:#111;font-size:12px;letter-spacing:0;transform-origin:0 50%;transform:scaleX(0.885);">Maßnahmen</span>
<svg style="left:77.3px;top:991.5px" width="6" height="9" viewBox="0 0 6 9"><path d="M0.8 0.8 L4 4.5 L0.8 8.2 Z" fill="#fcfcfc" stroke="#606060" stroke-width="1"/></svg>
<svg style="left:92px;top:988px" width="14.0" height="14.0" viewBox="0 0 14 14"><path d="M1.5 0.5 H11 V11 H13.5 V13.5 H1.5 Z" fill="#a8162c"/><path d="M0.5 0 H10.5 V12.5 H0.5 Z" fill="#cc2038"/><path d="M0.5 0 H3 V12.5 H0.5 Z" fill="#b81a30" opacity="0.6"/></svg>
<span class="t" style="left:113px;top:988.5px;line-height:14px;color:#111;font-size:12px;letter-spacing:0;transform-origin:0 50%;transform:scaleX(0.885);">Fertigungseinrichtungen</span>
<div style="left:27px;top:995px;width:470px;height:23px;background:#fcfcfc;"></div>
<svg style="left:488px;top:629px" width="10" height="6" viewBox="0 0 10 6"><path d="M5 0.5 L9.5 5.5 H0.5 Z" fill="#e0e0e0"/></svg>
<div style="left:489px;top:642px;width:8px;height:302px;background:#d2d2d2;"></div>
<svg style="left:488px;top:983px" width="10" height="6" viewBox="0 0 10 6"><path d="M0.5 0.5 H9.5 L5 5.5 Z" fill="#e0e0e0"/></svg>
<div style="left:32px;top:997px;width:152px;height:20px;background:#c41e3a;"></div>
<svg style="left:35px;top:999px" width="16" height="17" viewBox="0 0 16 17"><path d="M4 5 H9 M7.5 5 V12.5 H10" fill="none" stroke="#e8c0c0" stroke-width="1.1"/><path d="M3.5 0.5 L7 4 L3.5 7.5 L0 4 Z" fill="#f08020"/><path d="M11.5 2 L14.5 5 L11.5 8 L8.5 5 Z" fill="#e02020"/><path d="M11 9.5 L14.5 13 L11 16.5 L7.6 13 Z" fill="#68c038"/></svg>
<span class="t" style="left:55px;top:1001.7px;line-height:14px;color:#fff;font-size:12px;letter-spacing:0;transform-origin:0 50%;transform:scaleX(0.9535);">Systemelement Details</span>
<svg style="left:486.4px;top:1003.9px" width="9.2" height="9.2" viewBox="0 0 9.2 9.2"><path d="M1 1 L8.2 8.2 M8.2 1 L1 8.2" stroke="#1a2a4a" stroke-width="1.3" fill="none"/></svg>
<div style="left:506px;top:225px;width:1413px;height:2px;background:#c4c4c4;"></div>
<div style="left:506px;top:227px;width:1412px;height:252px;background:#fcfcfc;"></div>
<div style="left:506px;top:227px;width:1px;height:60px;background:#dddddd;"></div>
<div style="left:506px;top:246px;width:1px;height:1px;background:#c4c4c4;"></div>
<div style="left:506px;top:286px;width:1px;height:1px;background:#c4c4c4;"></div>
<div style="left:507px;top:227px;width:1411px;height:252px;overflow:hidden;">
<div class="hd" style="left:0px;top:0px;width:428px;height:20px;"><span class="t" style="left:0;width:428px;text-align:center;top:2.2px;line-height:14px;font-weight:bold;letter-spacing:0;">Fräsen</span></div>
<div class="hd" style="left:428px;top:0px;width:990px;height:20px;"><span class="t" style="left:623px;top:2.2px;line-height:14px;letter-spacing:-0.2px;">Prüfmerkmale</span></div>
<div class="hd" style="left:0px;top:20px;width:59px;height:40px;"><span class="t" style="left:0;width:58px;text-align:center;top:12.5px;line-height:13px;letter-spacing:-0.2px;">Stückzahl</span></div>
<div class="hd" style="left:59px;top:20px;width:60px;height:40px;"><span class="t" style="left:0;width:59px;text-align:center;top:12.5px;line-height:13px;letter-spacing:-0.2px;">Häufigkeit</span></div>
<div class="hd" style="left:119px;top:20px;width:189px;height:40px;"><span class="t" style="left:0;width:188px;text-align:center;top:12.5px;line-height:13px;letter-spacing:-0.2px;">Intervall</span></div>
<div class="hd" style="left:308px;top:20px;width:60px;height:40px;"><span class="t" style="left:0;width:59px;text-align:center;top:12.5px;line-height:13px;letter-spacing:-0.2px;">Stichpro...</span></div>
<div class="hd" style="left:368px;top:20px;width:60px;height:40px;"><span class="t" style="left:0;width:59px;text-align:center;top:12.5px;line-height:13px;letter-spacing:-0.2px;">Prüfort</span></div>
<div class="hd" style="left:428px;top:20px;width:60px;height:40px;"><span class="t" style="left:0;width:59px;text-align:center;top:12.5px;line-height:13px;letter-spacing:-0.2px;">Nr.</span></div>
<div class="hd" style="left:488px;top:20px;width:60px;height:40px;"><span class="t" style="left:0;width:59px;text-align:center;top:7px;line-height:13px;letter-spacing:-0.2px;">Merkmal<br>(Bezeich...</span></div>
<div class="hd" style="left:548px;top:20px;width:60px;height:40px;"><span class="t" style="left:0;width:59px;text-align:center;top:12.5px;line-height:13px;letter-spacing:-0.2px;">Typ</span></div>
<div class="hd" style="left:608px;top:20px;width:60px;height:40px;"><span class="t" style="left:0;width:59px;text-align:center;top:12.5px;line-height:13px;letter-spacing:-0.2px;">Lenkung...</span></div>
<div class="hd" style="left:668px;top:20px;width:92px;height:40px;"><span class="t" style="left:0;width:91px;text-align:center;top:12.5px;line-height:13px;letter-spacing:-0.2px;">Prüfhinweis</span></div>
<div class="hd" style="left:760px;top:20px;width:80px;height:40px;"><span class="t" style="left:0;width:79px;text-align:center;top:12.5px;line-height:13px;letter-spacing:-0.2px;">Prüfmittel</span></div>
<div class="hd" style="left:840px;top:20px;width:60px;height:40px;"><span class="t" style="left:0;width:59px;text-align:center;top:12.5px;line-height:13px;letter-spacing:-0.2px;">Sollwert</span></div>
<div class="hd" style="left:900px;top:20px;width:60px;height:40px;"><span class="t" style="left:0;width:59px;text-align:center;top:12.5px;line-height:13px;letter-spacing:-0.2px;">Einheit</span></div>
<div class="hd" style="left:960px;top:20px;width:60px;height:40px;"><span class="t" style="left:0;width:59px;text-align:center;top:12.5px;line-height:13px;letter-spacing:-0.2px;">K.Stellen</span></div>
<div class="hd" style="left:1020px;top:20px;width:60px;height:40px;"><span class="t" style="left:0;width:59px;text-align:center;top:7px;line-height:13px;letter-spacing:-0.2px;">Symmetr...<br>Toleranz</span></div>
<div class="hd" style="left:1080px;top:20px;width:60px;height:40px;"><span class="t" style="left:0;width:59px;text-align:center;top:12.5px;line-height:13px;letter-spacing:-0.2px;">UT</span></div>
<div class="hd" style="left:1140px;top:20px;width:60px;height:40px;"><span class="t" style="left:0;width:59px;text-align:center;top:12.5px;line-height:13px;letter-spacing:-0.2px;">OT</span></div>
<div class="hd" style="left:1200px;top:20px;width:60px;height:40px;"><span class="t" style="left:0;width:59px;text-align:center;top:12.5px;line-height:13px;letter-spacing:-0.2px;">UGW</span></div>
<div class="hd" style="left:1260px;top:20px;width:60px;height:40px;"><span class="t" style="left:0;width:59px;text-align:center;top:12.5px;line-height:13px;letter-spacing:-0.2px;">OGW</span></div>
<div class="hd" style="left:1320px;top:20px;width:60px;height:40px;"><span class="t" style="left:0;width:59px;text-align:center;top:12.5px;line-height:13px;letter-spacing:-0.2px;">UEG X</span></div>
<div class="hd" style="left:1380px;top:20px;width:60px;height:40px;"><span class="t" style="left:0;width:59px;text-align:center;top:12.5px;line-height:13px;letter-spacing:-0.2px;">OEG X</span></div>
<div class="c" style="left:0px;top:60px;width:59px;height:78px;"><span class="t" style="right:4px;top:0.7px;line-height:14px;letter-spacing:0;">3</span></div>
<div class="c" style="left:59px;top:60px;width:60px;height:78px;"><span class="t" style="right:4px;top:0.7px;line-height:14px;letter-spacing:0;">30</span></div>
<div class="c" style="left:119px;top:60px;width:189px;height:78px;"><span class="t" style="left:3.5px;top:0.7px;line-height:14px;letter-spacing:-0.1px;">Minute</span></div>
<div class="c" style="left:308px;top:60px;width:60px;height:78px;"></div>
<div class="c" style="left:368px;top:60px;width:60px;height:78px;"></div>
<div class="c" style="left:0px;top:138px;width:59px;height:21px;"><span class="t" style="right:4px;top:0.7px;line-height:14px;letter-spacing:0;">3</span></div>
<div class="c" style="left:59px;top:138px;width:60px;height:21px;"><span class="t" style="right:4px;top:0.7px;line-height:14px;letter-spacing:0;">30</span></div>
<div class="c" style="left:119px;top:138px;width:189px;height:21px;"><span class="t" style="left:3.5px;top:0.7px;line-height:14px;letter-spacing:-0.1px;">Minute</span></div>
<div class="c" style="left:308px;top:138px;width:60px;height:21px;"></div>
<div class="c" style="left:368px;top:138px;width:60px;height:21px;"></div>
<div class="c" style="left:0px;top:159px;width:59px;height:21px;"><span class="t" style="right:4px;top:0.7px;line-height:14px;letter-spacing:0;">3</span></div>
<div class="c" style="left:59px;top:159px;width:60px;height:21px;"><span class="t" style="right:4px;top:0.7px;line-height:14px;letter-spacing:0;">30</span></div>
<div class="c" style="left:119px;top:159px;width:189px;height:21px;"><span class="t" style="left:3.5px;top:0.7px;line-height:14px;letter-spacing:-0.1px;">Minute</span></div>
<div class="c" style="left:308px;top:159px;width:60px;height:21px;"></div>
<div class="c" style="left:368px;top:159px;width:60px;height:21px;"></div>
<div class="c" style="left:428px;top:60px;width:60px;height:21px;"><span class="t" style="left:3.5px;top:0.7px;line-height:14px;letter-spacing:0;">10</span></div>
<div class="c" style="left:488px;top:60px;width:60px;height:21px;"><span class="t" style="left:4.5px;top:0.7px;line-height:14px;color:#1c6e76;letter-spacing:-0.461px;">Winkel</span></div>
<div class="c" style="left:548px;top:60px;width:60px;height:21px;"><span class="t" style="left:3.5px;top:0.7px;line-height:14px;letter-spacing:-0.1px;">Var.</span></div>
<div class="c" style="left:608px;top:60px;width:60px;height:21px;"><span class="t" style="left:3.5px;top:0.7px;line-height:14px;letter-spacing:-0.1px;">ÜK</span></div>
<div class="c" style="left:668px;top:60px;width:92px;height:21px;"></div>
<div class="c" style="left:760px;top:60px;width:80px;height:21px;"></div>
<div class="c" style="left:840px;top:60px;width:60px;height:21px;"><span class="t" style="right:4px;top:0.7px;line-height:14px;letter-spacing:0;">90,00</span></div>
<div class="c" style="left:900px;top:60px;width:60px;height:21px;"><span class="t" style="left:3.5px;top:0.7px;line-height:14px;letter-spacing:0;">°</span></div>
<div class="c" style="left:960px;top:60px;width:60px;height:21px;"><span class="t" style="right:4px;top:0.7px;line-height:14px;letter-spacing:0;">2</span></div>
<div class="c" style="left:1020px;top:60px;width:60px;height:21px;"><span class="t" style="right:4px;top:0.7px;line-height:14px;letter-spacing:0;">0,05</span></div>
<div class="c" style="left:1080px;top:60px;width:60px;height:21px;"><span class="t" style="right:4px;top:0.7px;line-height:14px;letter-spacing:0;">-0,03</span></div>
<div class="c" style="left:1140px;top:60px;width:60px;height:21px;"><span class="t" style="right:4px;top:0.7px;line-height:14px;letter-spacing:0;">0,03</span></div>
<div class="c" style="left:1200px;top:60px;width:60px;height:21px;"><span class="t" style="right:4px;top:0.7px;line-height:14px;letter-spacing:0;">89,97</span></div>
<div class="c" style="left:1260px;top:60px;width:60px;height:21px;"><span class="t" style="right:4px;top:0.7px;line-height:14px;letter-spacing:0;">90,03</span></div>
<div class="c" style="left:1320px;top:60px;width:60px;height:21px;"><span class="t" style="right:4px;top:0.7px;line-height:14px;letter-spacing:0;">89,98</span></div>
<div class="c" style="left:1380px;top:60px;width:60px;height:21px;"><span class="t" style="right:4px;top:0.7px;line-height:14px;letter-spacing:0;">90,02</span></div>
<div class="c" style="left:428px;top:81px;width:60px;height:57px;"><span class="t" style="left:3.5px;top:0.7px;line-height:14px;letter-spacing:0;">40</span></div>
<div class="c" style="left:488px;top:81px;width:60px;height:57px;"><span class="t" style="left:4.5px;top:0.7px;line-height:14px;color:#1c6e76;line-height:13px;top:2.2px;letter-spacing:-0.230px;">Keine<br>Farbbildun<br>g</span></div>
<div class="c" style="left:548px;top:81px;width:60px;height:57px;"><span class="t" style="left:3.5px;top:0.7px;line-height:14px;letter-spacing:-0.1px;">Attr.</span></div>
<div class="c" style="left:608px;top:81px;width:60px;height:57px;"><span class="t" style="left:3.5px;top:0.7px;line-height:14px;letter-spacing:-0.1px;">P-Karte</span></div>
<div class="c" style="left:668px;top:81px;width:92px;height:57px;"><span class="t" style="left:3.5px;top:0.7px;line-height:14px;letter-spacing:-0.15px;line-height:13px;top:2.2px;">Wieviele Teile der<br>Stichprobe<br>zeigen eine<br>Verfärbung?</span></div>
<div class="c" style="left:760px;top:81px;width:80px;height:57px;"></div>
<div class="c" style="left:840px;top:81px;width:60px;height:57px;"></div>
<div class="c" style="left:900px;top:81px;width:60px;height:57px;"></div>
<div class="c" style="left:960px;top:81px;width:60px;height:57px;"><span class="t" style="right:4px;top:0.7px;line-height:14px;letter-spacing:0;">3</span></div>
<div class="c" style="left:1020px;top:81px;width:60px;height:57px;"></div>
<div class="c" style="left:1080px;top:81px;width:60px;height:57px;"></div>
<div class="c" style="left:1140px;top:81px;width:60px;height:57px;"></div>
<div class="c" style="left:1200px;top:81px;width:60px;height:57px;"></div>
<div class="c" style="left:1260px;top:81px;width:60px;height:57px;"></div>
<div class="c" style="left:1320px;top:81px;width:60px;height:57px;"></div>
<div class="c" style="left:1380px;top:81px;width:60px;height:57px;"></div>
<div class="c" style="left:428px;top:138px;width:60px;height:21px;"><span class="t" style="left:3.5px;top:0.7px;line-height:14px;letter-spacing:0;">20</span></div>
<div class="c" style="left:488px;top:138px;width:60px;height:21px;"><span class="t" style="left:4.5px;top:0.7px;line-height:14px;color:#1c6e76;letter-spacing:-0.160px;">Abstand</span></div>
<div class="c" style="left:548px;top:138px;width:60px;height:21px;"><span class="t" style="left:3.5px;top:0.7px;line-height:14px;letter-spacing:-0.1px;">Var.</span></div>
<div class="c" style="left:608px;top:138px;width:60px;height:21px;"><span class="t" style="left:3.5px;top:0.7px;line-height:14px;letter-spacing:-0.1px;">ÜK</span></div>
<div class="c" style="left:668px;top:138px;width:92px;height:21px;"></div>
<div class="c" style="left:760px;top:138px;width:80px;height:21px;"></div>
<div class="c" style="left:840px;top:138px;width:60px;height:21px;"><span class="t" style="right:4px;top:0.7px;line-height:14px;letter-spacing:0;">36,00</span></div>
<div class="c" style="left:900px;top:138px;width:60px;height:21px;"><span class="t" style="left:3.5px;top:0.7px;line-height:14px;letter-spacing:0;">mm</span></div>
<div class="c" style="left:960px;top:138px;width:60px;height:21px;"><span class="t" style="right:4px;top:0.7px;line-height:14px;letter-spacing:0;">2</span></div>
<div class="c" style="left:1020px;top:138px;width:60px;height:21px;"><span class="t" style="right:4px;top:0.7px;line-height:14px;letter-spacing:0;">0,60</span></div>
<div class="c" style="left:1080px;top:138px;width:60px;height:21px;"><span class="t" style="right:4px;top:0.7px;line-height:14px;letter-spacing:0;">-0,30</span></div>
<div class="c" style="left:1140px;top:138px;width:60px;height:21px;"><span class="t" style="right:4px;top:0.7px;line-height:14px;letter-spacing:0;">0,30</span></div>
<div class="c" style="left:1200px;top:138px;width:60px;height:21px;"><span class="t" style="right:4px;top:0.7px;line-height:14px;letter-spacing:0;">35,70</span></div>
<div class="c" style="left:1260px;top:138px;width:60px;height:21px;"><span class="t" style="right:4px;top:0.7px;line-height:14px;letter-spacing:0;">36,30</span></div>
<div class="c" style="left:1320px;top:138px;width:60px;height:21px;"><span class="t" style="right:4px;top:0.7px;line-height:14px;letter-spacing:0;">35,76</span></div>
<div class="c" style="left:1380px;top:138px;width:60px;height:21px;"><span class="t" style="right:4px;top:0.7px;line-height:14px;letter-spacing:0;">36,24</span></div>
<div class="c" style="left:428px;top:159px;width:60px;height:21px;"><span class="t" style="left:3.5px;top:0.7px;line-height:14px;letter-spacing:0;">30</span></div>
<div class="c" style="left:488px;top:159px;width:60px;height:21px;"><span class="t" style="left:4.5px;top:0.7px;line-height:14px;color:#1c6e76;letter-spacing:0.041px;">Vertiefung</span></div>
<div class="c" style="left:548px;top:159px;width:60px;height:21px;"><span class="t" style="left:3.5px;top:0.7px;line-height:14px;letter-spacing:-0.1px;">Var.</span></div>
<div class="c" style="left:608px;top:159px;width:60px;height:21px;"><span class="t" style="left:3.5px;top:0.7px;line-height:14px;letter-spacing:-0.1px;">ÜK</span></div>
<div class="c" style="left:668px;top:159px;width:92px;height:21px;"></div>
<div class="c" style="left:760px;top:159px;width:80px;height:21px;"></div>
<div class="c" style="left:840px;top:159px;width:60px;height:21px;"><span class="t" style="right:4px;top:0.7px;line-height:14px;letter-spacing:0;">9,75</span></div>
<div class="c" style="left:900px;top:159px;width:60px;height:21px;"><span class="t" style="left:3.5px;top:0.7px;line-height:14px;letter-spacing:0;">mm</span></div>
<div class="c" style="left:960px;top:159px;width:60px;height:21px;"><span class="t" style="right:4px;top:0.7px;line-height:14px;letter-spacing:0;">2</span></div>
<div class="c" style="left:1020px;top:159px;width:60px;height:21px;"><span class="t" style="right:4px;top:0.7px;line-height:14px;letter-spacing:0;">0,40</span></div>
<div class="c" style="left:1080px;top:159px;width:60px;height:21px;"><span class="t" style="right:4px;top:0.7px;line-height:14px;letter-spacing:0;">-0,20</span></div>
<div class="c" style="left:1140px;top:159px;width:60px;height:21px;"><span class="t" style="right:4px;top:0.7px;line-height:14px;letter-spacing:0;">0,20</span></div>
<div class="c" style="left:1200px;top:159px;width:60px;height:21px;"><span class="t" style="right:4px;top:0.7px;line-height:14px;letter-spacing:0;">9,55</span></div>
<div class="c" style="left:1260px;top:159px;width:60px;height:21px;"><span class="t" style="right:4px;top:0.7px;line-height:14px;letter-spacing:0;">9,95</span></div>
<div class="c" style="left:1320px;top:159px;width:60px;height:21px;"><span class="t" style="right:4px;top:0.7px;line-height:14px;letter-spacing:0;">9,59</span></div>
<div class="c" style="left:1380px;top:159px;width:60px;height:21px;"><span class="t" style="right:4px;top:0.7px;line-height:14px;letter-spacing:0;">9,91</span></div>
</div>
<div style="left:506px;top:287px;width:59px;height:77px;border:1px dotted #222;"></div>
<svg style="left:510px;top:466px" width="6" height="9" viewBox="0 0 6 9"><path d="M5 0.5 V8.5 L0.5 4.5 Z" fill="#dcdcdc"/></svg>
<div style="left:523px;top:466px;width:1116px;height:9px;background:#d6d6d6;"></div>
<svg style="left:1905px;top:466px" width="6" height="9" viewBox="0 0 6 9"><path d="M0.5 0.5 V8.5 L5.5 4.5 Z" fill="#dcdcdc"/></svg>
<div style="left:506px;top:479px;width:1412px;height:1px;background:#d4d4d4;"></div>
<div style="left:1918px;top:225px;width:2px;height:770px;background:#f6f6f6;"></div>
<div style="left:1918px;top:287px;width:1px;height:193px;background:#d6d6d6;"></div>
<div style="left:511px;top:482px;width:111px;height:20px;background:#e4e4e4;"></div>
<svg style="left:514px;top:484px" width="14" height="16" viewBox="0 0 14 16"><path d="M0.5 1.5 H9.5 L13.5 5 V15.5 H0.5 Z" fill="#fbfbf4" stroke="#b8b8b8"/><path d="M1 1.2 H9 V2.8 H1 Z" fill="#f4b060"/><rect x="1.5" y="3" width="9" height="3" fill="#78c848"/><rect x="2" y="7" width="10" height="7" fill="#fff" stroke="#b8b8b8" stroke-width="0.6"/><path d="M2 9.3 H12 M2 11.6 H12 M5.3 7 V14 M8.6 7 V14" stroke="#c0c0c0" stroke-width="0.7"/></svg>
<span class="t" style="left:533.5px;top:485.5px;line-height:14px;font-size:12px;color:#222;letter-spacing:0;transform-origin:0 50%;transform:scaleX(0.9656);">FMEA-Formular</span>
<div style="left:624px;top:482px;width:128px;height:20px;background:#c41e3a;"></div>
<svg style="left:628px;top:484px" width="14" height="16" viewBox="0 0 14 16"><path d="M0.5 1.5 H9.5 L13.5 5 V15.5 H0.5 Z" fill="#fbfbf4" stroke="#b8b8b8"/><path d="M1 1.2 H9 V2.8 H1 Z" fill="#f4b060"/><rect x="1.5" y="3" width="9" height="3" fill="#78c848"/><rect x="2" y="7" width="10" height="7" fill="#fff" stroke="#b8b8b8" stroke-width="0.6"/><path d="M2 9.3 H12 M2 11.6 H12 M5.3 7 V14 M8.6 7 V14" stroke="#c0c0c0" stroke-width="0.7"/></svg>
<span class="t" style="left:647.3px;top:485.5px;line-height:14px;font-size:12px;color:#fff;letter-spacing:0;transform-origin:0 50%;transform:scaleX(0.9980);">Prüfplan-Formular</span>
<svg style="left:1904.4px;top:488.9px" width="9.2" height="9.2" viewBox="0 0 9.2 9.2"><path d="M1 1 L8.2 8.2 M8.2 1 L1 8.2" stroke="#1a2a4a" stroke-width="1.3" fill="none"/></svg>
<div style="left:506px;top:504px;width:1413px;height:5px;background:#c4c4c4;border-top:1px solid #d2d2d2;"></div>
<div style="left:506px;top:509px;width:1412px;height:486px;background:#fcfcfc;"></div>
<div style="left:506px;top:509px;width:1px;height:80px;background:#dddddd;"></div>
<div style="left:506px;top:548px;width:1px;height:1px;background:#c4c4c4;"></div>
<div style="left:506px;top:588px;width:1px;height:1px;background:#c4c4c4;"></div>
<div style="left:507px;top:509px;width:1411px;height:486px;overflow:hidden;">
<div class="hd" style="left:0px;top:0px;width:119px;height:40px;"><span class="t" style="left:0;width:118px;text-align:center;top:12.5px;line-height:13px;font-weight:bold;letter-spacing:0;">Fräsen</span></div>
<div class="hd" style="left:119px;top:0px;width:60px;height:80px;"><span class="t" style="left:0;width:59px;text-align:center;top:27.5px;line-height:13px;letter-spacing:-0.2px;">Klassifikatio<br>n</span></div>
<div class="hd" style="left:179px;top:0px;width:560px;height:20px;"><span class="t" style="left:0;width:559px;text-align:center;top:2.5px;line-height:13px;letter-spacing:-0.2px;">Methoden</span></div>
<div class="hd" style="left:179px;top:20px;width:240px;height:20px;"><span class="t" style="left:0;width:239px;text-align:center;top:2.5px;line-height:13px;letter-spacing:-0.2px;"><span style="letter-spacing:-0.088px;">Produkt-, Prozessspezifikation, Toleranz</span></span></div>
<div class="hd" style="left:419px;top:20px;width:80px;height:60px;"><span class="t" style="left:0;width:79px;text-align:center;top:23.2px;line-height:13px;letter-spacing:-0.2px;">Prüfmittel</span></div>
<div class="hd" style="left:499px;top:20px;width:180px;height:20px;"><span class="t" style="left:0;width:179px;text-align:center;top:2.5px;line-height:13px;letter-spacing:-0.2px;">Stichprobe</span></div>
<div class="hd" style="left:679px;top:20px;width:60px;height:60px;"><span class="t" style="left:0;width:59px;text-align:center;top:17.3px;line-height:13px;letter-spacing:-0.2px;"><span style="letter-spacing:-0.498px;">Lenkungsme<br>thode</span></span></div>
<div class="hd" style="left:739px;top:0px;width:675px;height:40px;"></div>
<span class="t" style="left:1012px;top:11px;line-height:14px;letter-spacing:-0.2px;">Reaktionsplanmaßnahmen</span>
<div class="hd" style="left:0px;top:40px;width:59px;height:40px;"><span class="t" style="left:0;width:58px;text-align:center;top:12.5px;line-height:13px;letter-spacing:-0.2px;">Nr.</span></div>
<div class="hd" style="left:59px;top:40px;width:60px;height:40px;"><span class="t" style="left:0;width:59px;text-align:center;top:6.8px;line-height:13px;letter-spacing:-0.2px;">Merkmal<br>(Bezeich...</span></div>
<div class="hd" style="left:179px;top:40px;width:60px;height:40px;"><span class="t" style="left:0;width:59px;text-align:center;top:12.5px;line-height:13px;letter-spacing:-0.2px;">Sollwert</span></div>
<div class="hd" style="left:239px;top:40px;width:60px;height:40px;"><span class="t" style="left:0;width:59px;text-align:center;top:12.5px;line-height:13px;letter-spacing:-0.2px;">Einheit</span></div>
<div class="hd" style="left:299px;top:40px;width:60px;height:40px;"><span class="t" style="left:0;width:59px;text-align:center;top:12.5px;line-height:13px;letter-spacing:-0.2px;">UGW</span></div>
<div class="hd" style="left:359px;top:40px;width:60px;height:40px;"><span class="t" style="left:0;width:59px;text-align:center;top:12.5px;line-height:13px;letter-spacing:-0.2px;">OGW</span></div>
<div class="hd" style="left:499px;top:40px;width:60px;height:40px;"><span class="t" style="left:0;width:59px;text-align:center;top:12.5px;line-height:13px;letter-spacing:-0.2px;">Stückzahl</span></div>
<div class="hd" style="left:559px;top:40px;width:60px;height:40px;"><span class="t" style="left:0;width:59px;text-align:center;top:12.5px;line-height:13px;letter-spacing:-0.2px;">Häufigkeit</span></div>
<div class="hd" style="left:619px;top:40px;width:60px;height:40px;"><span class="t" style="left:0;width:59px;text-align:center;top:12.5px;line-height:13px;letter-spacing:-0.2px;">Intervall</span></div>
<div class="hd" style="left:739px;top:40px;width:466px;height:40px;"><span class="t" style="left:0;width:465px;text-align:center;top:12.5px;line-height:13px;letter-spacing:-0.2px;">Reaktion</span></div>
<div class="hd" style="left:1205px;top:40px;width:187px;height:40px;"><span class="t" style="left:0;width:186px;text-align:center;top:12.5px;line-height:13px;letter-spacing:-0.2px;"><span style="letter-spacing:0.023px;">Ausführungsverantwortlicher</span></span></div>
<div class="hd" style="left:1392px;top:40px;width:22px;height:40px;"></div>
<div class="c" style="left:0px;top:80px;width:59px;height:21px;"><span class="t" style="left:2.7px;top:0.7px;line-height:14px;letter-spacing:0;">10</span></div>
<div class="c" style="left:59px;top:80px;width:60px;height:21px;"><span class="t" style="left:4.5px;top:0.7px;line-height:14px;color:#1c6e76;letter-spacing:-0.461px;">Winkel</span></div>
<div class="c" style="left:119px;top:80px;width:60px;height:21px;"></div>
<div class="c" style="left:179px;top:80px;width:60px;height:21px;"><span class="t" style="right:4px;top:0.7px;line-height:14px;letter-spacing:0;">90,00</span></div>
<div class="c" style="left:239px;top:80px;width:60px;height:21px;"><span class="t" style="left:3.5px;top:0.7px;line-height:14px;letter-spacing:0;">°</span></div>
<div class="c" style="left:299px;top:80px;width:60px;height:21px;"><span class="t" style="right:4px;top:0.7px;line-height:14px;letter-spacing:0;">89,97</span></div>
<div class="c" style="left:359px;top:80px;width:60px;height:21px;"><span class="t" style="right:4px;top:0.7px;line-height:14px;letter-spacing:0;">90,03</span></div>
<div class="c" style="left:419px;top:80px;width:80px;height:21px;"></div>
<div class="c" style="left:499px;top:80px;width:60px;height:126px;"><span class="t" style="right:4px;top:0.7px;line-height:14px;letter-spacing:0;">3</span></div>
<div class="c" style="left:559px;top:80px;width:60px;height:126px;"><span class="t" style="right:4px;top:0.7px;line-height:14px;letter-spacing:0;">30</span></div>
<div class="c" style="left:619px;top:80px;width:60px;height:126px;"><span class="t" style="left:3.5px;top:0.7px;line-height:14px;letter-spacing:-0.1px;">Minute</span></div>
<div class="c" style="left:679px;top:80px;width:60px;height:21px;"><span class="t" style="left:3.5px;top:0.7px;line-height:14px;letter-spacing:-0.1px;">ÜK</span></div>
<div class="c" style="left:0px;top:101px;width:59px;height:105px;"><span class="t" style="left:2.7px;top:0.7px;line-height:14px;letter-spacing:0;">40</span></div>
<div class="c" style="left:59px;top:101px;width:60px;height:105px;"><span class="t" style="left:4.5px;top:0.7px;line-height:14px;color:#1c6e76;line-height:13px;top:2.2px;letter-spacing:-0.230px;">Keine<br>Farbbildun<br>g</span></div>
<div class="c" style="left:119px;top:101px;width:60px;height:105px;"></div>
<div class="c" style="left:179px;top:101px;width:60px;height:105px;"></div>
<div class="c" style="left:239px;top:101px;width:60px;height:105px;"></div>
<div class="c" style="left:299px;top:101px;width:60px;height:105px;"></div>
<div class="c" style="left:359px;top:101px;width:60px;height:105px;"></div>
<div class="c" style="left:419px;top:101px;width:80px;height:105px;"></div>
<div class="c" style="left:679px;top:101px;width:60px;height:105px;"><span class="t" style="left:3.5px;top:0.7px;line-height:14px;letter-spacing:-0.1px;">P-Karte</span></div>
<div class="c" style="left:0px;top:206px;width:59px;height:147px;"><span class="t" style="left:2.7px;top:0.7px;line-height:14px;letter-spacing:0;">20</span></div>
<div class="c" style="left:59px;top:206px;width:60px;height:147px;"><span class="t" style="left:4.5px;top:0.7px;line-height:14px;color:#1c6e76;letter-spacing:-0.160px;">Abstand</span></div>
<div class="c" style="left:119px;top:206px;width:60px;height:147px;"></div>
<div class="c" style="left:179px;top:206px;width:60px;height:147px;"><span class="t" style="right:4px;top:0.7px;line-height:14px;letter-spacing:0;">36,00</span></div>
<div class="c" style="left:239px;top:206px;width:60px;height:147px;"><span class="t" style="left:3.5px;top:0.7px;line-height:14px;letter-spacing:0;">mm</span></div>
<div class="c" style="left:299px;top:206px;width:60px;height:147px;"><span class="t" style="right:4px;top:0.7px;line-height:14px;letter-spacing:0;">35,70</span></div>
<div class="c" style="left:359px;top:206px;width:60px;height:147px;"><span class="t" style="right:4px;top:0.7px;line-height:14px;letter-spacing:0;">36,30</span></div>
<div class="c" style="left:419px;top:206px;width:80px;height:147px;"></div>
<div class="c" style="left:499px;top:206px;width:60px;height:147px;"><span class="t" style="right:4px;top:0.7px;line-height:14px;letter-spacing:0;">3</span></div>
<div class="c" style="left:559px;top:206px;width:60px;height:147px;"><span class="t" style="right:4px;top:0.7px;line-height:14px;letter-spacing:0;">30</span></div>
<div class="c" style="left:619px;top:206px;width:60px;height:147px;"><span class="t" style="left:3.5px;top:0.7px;line-height:14px;letter-spacing:-0.1px;">Minute</span></div>
<div class="c" style="left:679px;top:206px;width:60px;height:147px;"><span class="t" style="left:3.5px;top:0.7px;line-height:14px;letter-spacing:-0.1px;">ÜK</span></div>
<div class="c" style="left:0px;top:353px;width:59px;height:105px;"><span class="t" style="left:2.7px;top:0.7px;line-height:14px;letter-spacing:0;">30</span></div>
<div class="c" style="left:59px;top:353px;width:60px;height:105px;"><span class="t" style="left:4.5px;top:0.7px;line-height:14px;color:#1c6e76;letter-spacing:0.041px;">Vertiefung</span></div>
<div class="c" style="left:119px;top:353px;width:60px;height:105px;"></div>
<div class="c" style="left:179px;top:353px;width:60px;height:105px;"><span class="t" style="right:4px;top:0.7px;line-height:14px;letter-spacing:0;">9,75</span></div>
<div class="c" style="left:239px;top:353px;width:60px;height:105px;"><span class="t" style="left:3.5px;top:0.7px;line-height:14px;letter-spacing:0;">mm</span></div>
<div class="c" style="left:299px;top:353px;width:60px;height:105px;"><span class="t" style="right:4px;top:0.7px;line-height:14px;letter-spacing:0;">9,55</span></div>
<div class="c" style="left:359px;top:353px;width:60px;height:105px;"><span class="t" style="right:4px;top:0.7px;line-height:14px;letter-spacing:0;">9,95</span></div>
<div class="c" style="left:419px;top:353px;width:80px;height:105px;"></div>
<div class="c" style="left:499px;top:353px;width:60px;height:105px;"><span class="t" style="right:4px;top:0.7px;line-height:14px;letter-spacing:0;">3</span></div>
<div class="c" style="left:559px;top:353px;width:60px;height:105px;"><span class="t" style="right:4px;top:0.7px;line-height:14px;letter-spacing:0;">30</span></div>
<div class="c" style="left:619px;top:353px;width:60px;height:105px;"><span class="t" style="left:3.5px;top:0.7px;line-height:14px;letter-spacing:-0.1px;">Minute</span></div>
<div class="c" style="left:679px;top:353px;width:60px;height:105px;"><span class="t" style="left:3.5px;top:0.7px;line-height:14px;letter-spacing:-0.1px;">ÜK</span></div>
<div class="c" style="left:739px;top:80px;width:466px;height:21px;"><span class="t" style="left:24.3px;top:0.7px;line-height:14px;color:#000;letter-spacing:0.005px;">In Temperaturregelung eingreifen</span></div>
<div class="c" style="left:1205px;top:80px;width:187px;height:21px;"></div>
<div class="c" style="left:739px;top:101px;width:466px;height:21px;"><span class="t" style="left:4.5px;top:0.7px;line-height:14px;color:#741a24;letter-spacing:-0.024px;">Verfärbung</span></div>
<div class="c" style="left:1205px;top:101px;width:187px;height:21px;"></div>
<div class="c" style="left:739px;top:122px;width:466px;height:21px;"><span class="t" style="left:4.5px;top:0.7px;line-height:14px;color:#741a24;letter-spacing:-0.278px;">Zu hohe Geschwindigkeit</span></div>
<div class="c" style="left:1205px;top:122px;width:187px;height:21px;"></div>
<div class="c" style="left:739px;top:143px;width:466px;height:21px;"><span class="t" style="left:24.3px;top:0.7px;line-height:14px;color:#000;letter-spacing:-0.235px;">Geschwindidkeit manuell korrigieren</span></div>
<div class="c" style="left:1205px;top:143px;width:187px;height:21px;"></div>
<div class="c" style="left:739px;top:164px;width:466px;height:21px;"><span class="t" style="left:4.5px;top:0.7px;line-height:14px;color:#741a24;letter-spacing:-0.151px;">Umgebungstemperatur zu groß</span></div>
<div class="c" style="left:1205px;top:164px;width:187px;height:21px;"></div>
<div class="c" style="left:739px;top:185px;width:466px;height:21px;"><span class="t" style="left:24.3px;top:0.7px;line-height:14px;color:#000;letter-spacing:0.005px;">In Temperaturregelung eingreifen</span></div>
<div class="c" style="left:1205px;top:185px;width:187px;height:21px;"></div>
<div class="c" style="left:739px;top:206px;width:466px;height:21px;"><span class="t" style="left:4.5px;top:0.7px;line-height:14px;color:#741a24;letter-spacing:-0.208px;">Abstand zu klein</span></div>
<div class="c" style="left:1205px;top:206px;width:187px;height:21px;"></div>
<div class="c" style="left:739px;top:227px;width:466px;height:21px;"><span class="t" style="left:24.3px;top:0.7px;line-height:14px;color:#000;letter-spacing:-0.068px;">Produktion sofort stoppen und Meister informieren</span></div>
<div class="c" style="left:1205px;top:227px;width:187px;height:21px;"></div>
<div class="c" style="left:739px;top:248px;width:466px;height:21px;"><span class="t" style="left:4.5px;top:0.7px;line-height:14px;color:#741a24;letter-spacing:-0.143px;">Abstand zu groß</span></div>
<div class="c" style="left:1205px;top:248px;width:187px;height:21px;"></div>
<div class="c" style="left:739px;top:269px;width:466px;height:21px;"><span class="t" style="left:24.3px;top:0.7px;line-height:14px;color:#000;letter-spacing:-0.068px;">Produktion sofort stoppen und Meister informieren</span></div>
<div class="c" style="left:1205px;top:269px;width:187px;height:21px;"></div>
<div class="c" style="left:739px;top:290px;width:466px;height:21px;"><span class="t" style="left:4.5px;top:0.7px;line-height:14px;color:#741a24;letter-spacing:-0.135px;">Abnutzung Fräswerkzeug</span></div>
<div class="c" style="left:1205px;top:290px;width:187px;height:21px;"></div>
<div class="c" style="left:739px;top:311px;width:466px;height:21px;"><span class="t" style="left:24.3px;top:0.7px;line-height:14px;color:#000;letter-spacing:-0.090px;">Sofortiger Tausch Fräswerkzeug</span></div>
<div class="c" style="left:1205px;top:311px;width:187px;height:21px;"></div>
<div class="c" style="left:739px;top:332px;width:466px;height:21px;"><span class="t" style="left:4.5px;top:0.7px;line-height:14px;color:#741a24;letter-spacing:-0.309px;">Falsche Programmierung</span></div>
<div class="c" style="left:1205px;top:332px;width:187px;height:21px;"></div>
<div class="c" style="left:739px;top:353px;width:466px;height:21px;"><span class="t" style="left:4.5px;top:0.7px;line-height:14px;color:#741a24;letter-spacing:-0.062px;">Vertiefung zu lang</span></div>
<div class="c" style="left:1205px;top:353px;width:187px;height:21px;"></div>
<div class="c" style="left:739px;top:374px;width:466px;height:21px;"><span class="t" style="left:4.5px;top:0.7px;line-height:14px;color:#741a24;letter-spacing:-0.061px;">Vertiefung zu kurz</span></div>
<div class="c" style="left:1205px;top:374px;width:187px;height:21px;"></div>
<div class="c" style="left:739px;top:395px;width:466px;height:21px;"><span class="t" style="left:4.5px;top:0.7px;line-height:14px;color:#741a24;letter-spacing:-0.299px;">Falsche Einstellung</span></div>
<div class="c" style="left:1205px;top:395px;width:187px;height:21px;"></div>
<div class="c" style="left:739px;top:416px;width:466px;height:21px;"><span class="t" style="left:4.5px;top:0.7px;line-height:14px;color:#741a24;letter-spacing:-0.210px;">Verschleiss Vortrieb</span></div>
<div class="c" style="left:1205px;top:416px;width:187px;height:21px;"></div>
<div class="c" style="left:739px;top:437px;width:466px;height:21px;"><span class="t" style="left:24.3px;top:0.7px;line-height:14px;color:#000;letter-spacing:-0.096px;">Service verständigen</span></div>
<div class="c" style="left:1205px;top:437px;width:187px;height:21px;"></div>
</div>
<div style="left:1898px;top:609px;width:3px;height:1px;background:#c8c8c8;"></div>
<div style="left:1898px;top:714px;width:3px;height:1px;background:#c8c8c8;"></div>
<div style="left:1898px;top:861px;width:3px;height:1px;background:#c8c8c8;"></div>
<div style="left:1918px;top:589px;width:1px;height:406px;background:#d6d6d6;"></div>
<svg style="left:1905px;top:594px" width="10" height="6" viewBox="0 0 10 6"><path d="M4.7 0.5 L9.4 5 H0 Z" fill="#e2e2e2"/></svg>
<div style="left:1905px;top:696px;width:9px;height:264px;background:#d6d6d6;"></div>
<svg style="left:1905px;top:966px" width="10" height="6" viewBox="0 0 10 6"><path d="M0 0.5 H9.4 L4.7 5 Z" fill="#e2e2e2"/></svg>
<svg style="left:510px;top:981px" width="6" height="9" viewBox="0 0 6 9"><path d="M5 0.5 V8.5 L0.5 4.5 Z" fill="#dcdcdc"/></svg>
<div style="left:523px;top:981px;width:1342px;height:9px;background:#d6d6d6;"></div>
<svg style="left:1889px;top:981px" width="6" height="9" viewBox="0 0 6 9"><path d="M0.5 0.5 V8.5 L5.5 4.5 Z" fill="#dcdcdc"/></svg>
<div style="left:506px;top:994px;width:1412px;height:1px;background:#d0d0d0;"></div>
<div style="left:510px;top:997px;width:105px;height:20px;background:#e4e4e4;"></div>
<svg style="left:513px;top:999px" width="16" height="16" viewBox="0 0 16 16"><rect x="0.5" y="1.5" width="14" height="13" fill="#eef2f4" stroke="#a8a8a8"/><rect x="1" y="2" width="13" height="2.5" fill="#b8c8e0"/><path d="M3 13.5 C5 9 8 8 12 7 V13.5 Z" fill="#a8d0a8"/><rect x="10" y="3" width="3.5" height="3" fill="#e8b8a0"/></svg>
<span class="t" style="left:533px;top:1001.3px;line-height:14px;font-size:12px;color:#222;letter-spacing:0;transform-origin:0 50%;transform:scaleX(0.9448);">Eingabemaske</span>
<div style="left:617px;top:997px;width:85px;height:20px;background:#e4e4e4;"></div>
<svg style="left:620px;top:999px" width="17" height="16" viewBox="0 0 17 16"><rect x="0.5" y="2.5" width="15" height="11" fill="#f4f4f4" stroke="#9a9a9a"/><path d="M3 10 L5 6 L7 9 L9 5 L12 8" fill="none" stroke="#a8a8a8" stroke-width="1"/><path d="M2 15.5 H14" stroke="#b8b8b8" stroke-width="1"/></svg>
<span class="t" style="left:640px;top:1001.3px;line-height:14px;font-size:12px;color:#222;letter-spacing:0;transform-origin:0 50%;transform:scaleX(1.0101);">Zeichnung</span>
<div style="left:704px;top:997px;width:83px;height:20px;background:#e4e4e4;"></div>
<svg style="left:709.5px;top:1000px" width="10" height="15" viewBox="0 0 10 15"><path d="M4 0.5 H8.4 L6 5.8 H9 L2.6 14.5 L4.2 8.4 H1.2 Z" fill="#f0cc30" stroke="#c09818" stroke-width="0.8"/></svg>
<span class="t" style="left:726px;top:1001.3px;line-height:14px;font-size:12px;color:#222;letter-spacing:0;transform-origin:0 50%;transform:scaleX(0.9525);">Fehlernetz</span>
<div style="left:788px;top:997px;width:102px;height:20px;background:#c41e3a;"></div>
<svg style="left:791px;top:999px" width="14" height="16" viewBox="0 0 14 16"><path d="M0.5 1.5 H9.5 L13.5 5 V15.5 H0.5 Z" fill="#fbfbf4" stroke="#b8b8b8"/><path d="M1 1.2 H9 V2.8 H1 Z" fill="#f8e8a0"/><rect x="1.5" y="3" width="9" height="3" fill="#2858c8"/><rect x="2" y="7" width="10" height="7" fill="#fff" stroke="#b8b8b8" stroke-width="0.6"/><path d="M2 9.3 H12 M2 11.6 H12 M5.3 7 V14 M8.6 7 V14" stroke="#c0c0c0" stroke-width="0.7"/></svg>
<span class="t" style="left:811px;top:1001.3px;line-height:14px;font-size:12px;font-weight:bold;color:#fff;letter-spacing:-0.287px;">CP-Formular</span>
<svg style="left:1904.4px;top:1003.9px" width="9.2" height="9.2" viewBox="0 0 9.2 9.2"><path d="M1 1 L8.2 8.2 M8.2 1 L1 8.2" stroke="#1a2a4a" stroke-width="1.3" fill="none"/></svg>
<div style="left:0px;top:1017px;width:1920px;height:26px;background:#c41e3a;"></div>
<span class="t" style="left:6px;top:1024.3px;line-height:14px;color:#fff;font-size:12px;letter-spacing:-0.25px;">Bereit</span>
<div style="left:0px;top:1040px;width:2px;height:3px;background:#222;"></div>
<div style="left:1579px;top:1023px;width:15px;height:15px;background:#8c1428;color:#fff;font-weight:bold;font-size:9px;line-height:15px;text-align:center;letter-spacing:-0.3px;">DE</div>
<svg style="left:1600px;top:1024px" width="14" height="14" viewBox="0 0 14 14"><circle cx="7" cy="7" r="5.6" fill="none" stroke="#fff" stroke-width="1.8"/><path d="M7 3.5 L9.6 7.8 H4.4 Z" fill="#fff"/><rect x="5.8" y="7" width="2.4" height="3" fill="#fff"/></svg>
<span class="t" style="left:1627.5px;top:1023.8px;line-height:14px;color:#fff;font-size:12px;letter-spacing:-0.25px;letter-spacing:0;transform-origin:0 50%;transform:scaleX(0.9590);">Meier, Karl</span>
<span class="t" style="left:1696px;top:1023.8px;line-height:14px;color:#fff;font-size:12px;letter-spacing:-0.25px;letter-spacing:0;transform-origin:0 50%;transform:scaleX(0.9346);">PABHNB004</span>
<span class="t" style="left:1773px;top:1023.8px;line-height:14px;color:#fff;font-size:12px;letter-spacing:-0.25px;letter-spacing:0;transform-origin:0 50%;transform:scaleX(0.9641);">plant 001</span>
<span class="t" style="left:1837.5px;top:1023.8px;line-height:14px;color:#fff;font-size:12px;letter-spacing:-0.25px;">--</span>
<span class="t" style="left:1853.6px;top:1023.8px;line-height:14px;color:#fff;font-size:12px;letter-spacing:-0.25px;letter-spacing:0;transform-origin:0 50%;transform:scaleX(0.7884);">TEST01</span>
</div></body></html>
